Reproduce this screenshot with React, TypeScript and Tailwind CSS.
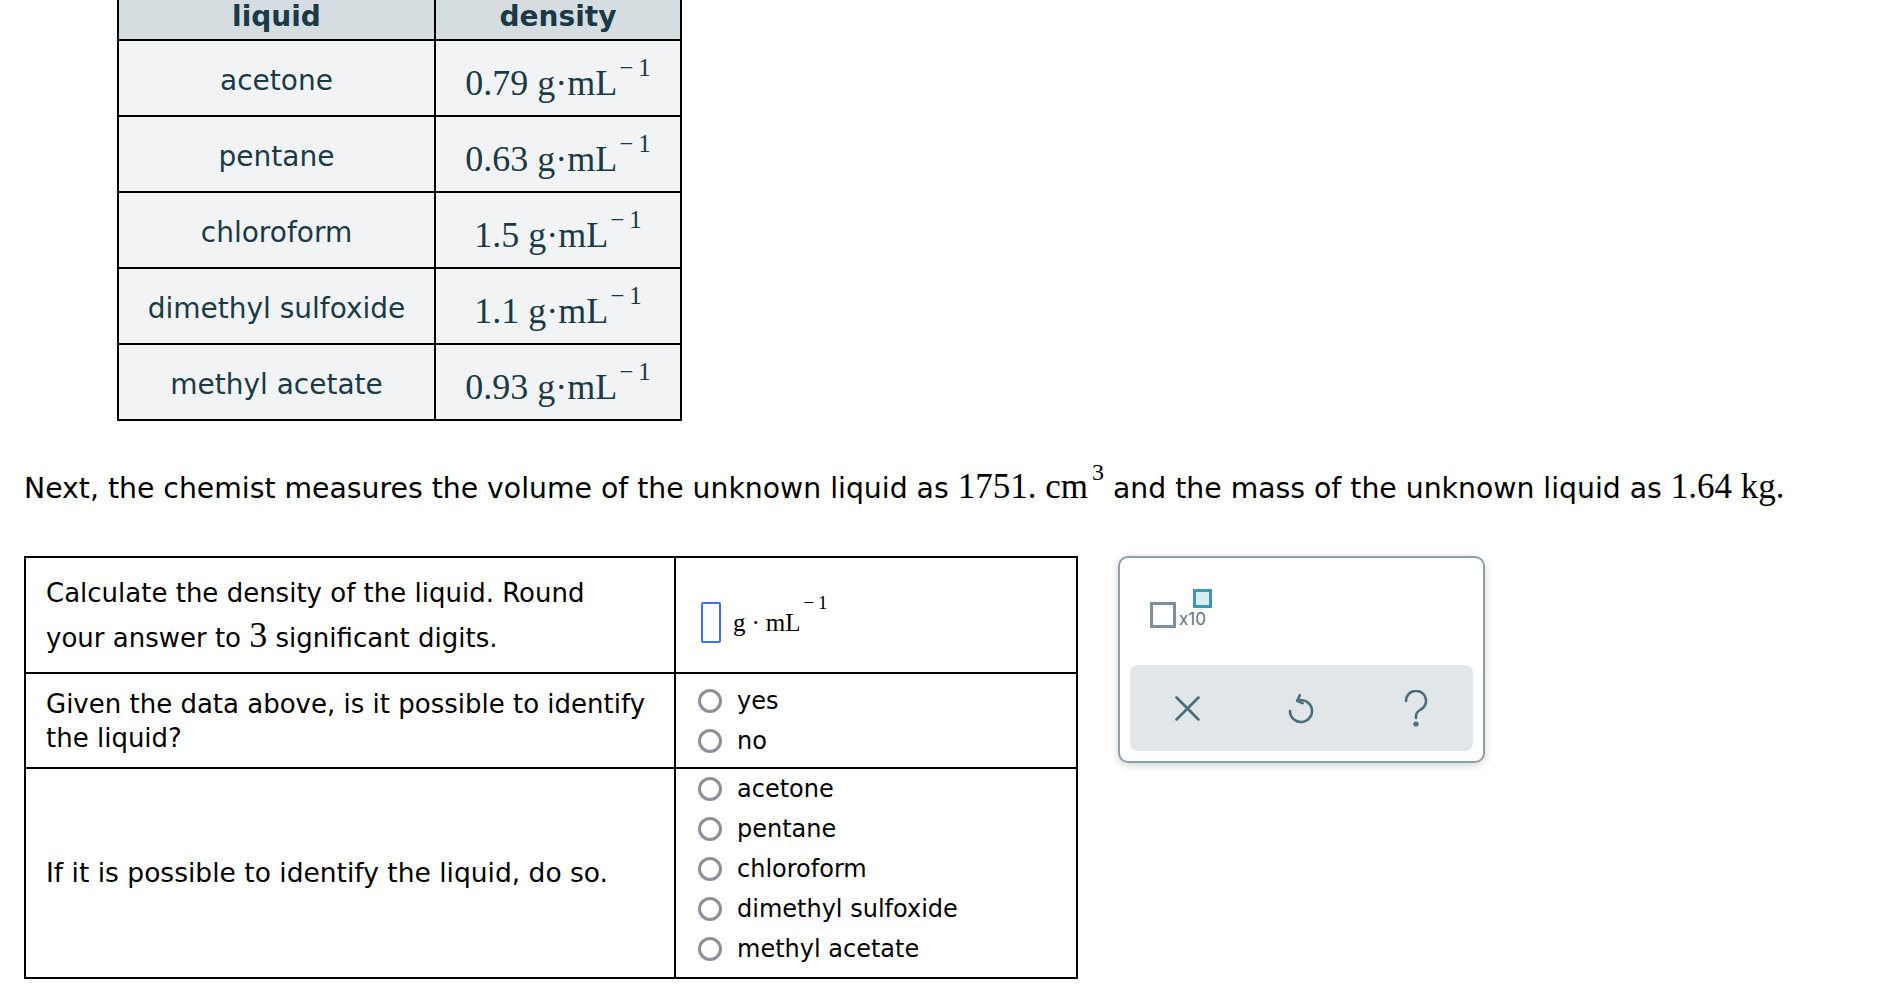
import React from 'react';

const densities = [
  { name: 'acetone', value: '0.79' },
  { name: 'pentane', value: '0.63' },
  { name: 'chloroform', value: '1.5' },
  { name: 'dimethyl sulfoxide', value: '1.1' },
  { name: 'methyl acetate', value: '0.93' },
];

const choices = ['acetone', 'pentane', 'chloroform', 'dimethyl sulfoxide', 'methyl acetate'];

const Density = ({ value }: { value: string }) => (
  <span className="font-['Liberation_Serif',serif] text-[36px] whitespace-nowrap">
    {value} g·mL
    <span className="ml-[2px] text-[25px] align-[19px] leading-[0]">−&thinsp;1</span>
  </span>
);

const Radio = ({ label }: { label: string }) => (
  <div className="flex items-center h-[40px] text-[24px]">
    <span className="w-[24px] h-[24px] rounded-full border-[3px] border-[#8e8f99] bg-white shrink-0" />
    <span className="ml-[15px]">{label}</span>
  </div>
);

const App: React.FC = () => {
  return (
    <div className="min-h-screen bg-white flex flex-col pl-[24px] font-['DejaVu_Sans',Verdana,sans-serif] text-black">
      {/* Density table */}
      <div className="ml-[93px] -mt-[13px] w-[565px] border-l-2 border-t-2 border-black grid grid-cols-[317px_246px] text-[#1b3a47]">
        <div className="h-[52px] pt-[6px] bg-[#d6dde1] border-r-2 border-b-2 border-black flex items-center justify-center text-[28px] font-bold">
          liquid
        </div>
        <div className="h-[52px] pt-[6px] bg-[#d6dde1] border-r-2 border-b-2 border-black flex items-center justify-center text-[28px] font-bold">
          density
        </div>
        {densities.map((row) => (
          <React.Fragment key={row.name}>
            <div className="h-[76px] pt-[5px] bg-[#f1f3f5] border-r-2 border-b-2 border-black flex items-center justify-center text-[28px]">
              {row.name}
            </div>
            <div className="h-[76px] bg-[#f1f3f5] border-r-2 border-b-2 border-black flex items-center justify-center pt-[10px]">
              <Density value={row.value} />
            </div>
          </React.Fragment>
        ))}
      </div>

      {/* Measurement sentence */}
      <p className="mt-[46px] text-[28.3px] leading-[40px] whitespace-nowrap">
        Next, the chemist measures the volume of the unknown liquid as{' '}
        <span className="font-['Liberation_Serif',serif] text-[35px]">
          1751. cm<span className="ml-[4px] text-[24px] align-[18px] leading-[0]">3</span>
        </span>{' '}
        and the mass of the unknown liquid as{' '}
        <span className="font-['Liberation_Serif',serif] text-[35px]">1.64 kg.</span>
      </p>

      <div className="mt-[47px] flex items-start">
        {/* Question table */}
        <div className="w-[1054px] border-l-2 border-t-2 border-black grid grid-cols-[650px_402px] text-[26px]">
          <div className="h-[116px] border-r-2 border-b-2 border-black flex items-center pl-[20px] leading-[42px]">
            <p className="max-w-[580px]">
              Calculate the density of the liquid. Round your answer to{' '}
              <span className="font-['Liberation_Serif',serif] text-[36px]">3</span> significant digits.
            </p>
          </div>
          <div className="h-[116px] border-r-2 border-b-2 border-black flex items-center pl-[25px] pt-[14px]">
            <div className="w-[20px] h-[41px] border-2 border-[#3d6ef5] rounded-[2px]" />
            <span className="ml-[12px] font-['Liberation_Serif',serif] text-[25px] whitespace-nowrap">
              g<span className="mx-[6px]">·</span>mL
              <span className="ml-[3px] text-[19px] align-[22px] leading-[0]">−&thinsp;1</span>
            </span>
          </div>

          <div className="h-[95px] border-r-2 border-b-2 border-black flex items-center pl-[20px] pr-[8px] leading-[34px]">
            <p>Given the data above, is it possible to identify the liquid?</p>
          </div>
          <div className="h-[95px] border-r-2 border-b-2 border-black flex flex-col justify-center pl-[22px]">
            <Radio label="yes" />
            <Radio label="no" />
          </div>

          <div className="h-[210px] border-r-2 border-b-2 border-black flex items-center pl-[20px] text-[26.5px]">
            <p>If it is possible to identify the liquid, do so.</p>
          </div>
          <div className="h-[210px] border-r-2 border-b-2 border-black flex flex-col justify-center pl-[22px] pb-[8px]">
            {choices.map((c) => (
              <Radio key={c} label={c} />
            ))}
          </div>
        </div>

        {/* Answer tools panel */}
        <div className="ml-[40px] w-[367px] h-[207px] rounded-[10px] border-2 border-[#8ea0a7] bg-white shadow-[0_2px_8px_rgba(0,0,0,0.18)] flex flex-col">
          <div className="h-[107px] flex items-start pl-[30px] pt-[31px]">
            <div className="flex items-end">
              <div className="w-[26px] h-[26px] border-[3px] border-[#7d9099]" />
              <div className="flex flex-col">
                <div className="ml-[17px] w-[19px] h-[19px] border-[3px] border-[#3d97b1] bg-[#d4eef4]" />
                <span className="mt-[2px] ml-[3px] text-[17px] leading-[18px] text-[#5a7480] font-['Inter',sans-serif]">x10</span>
              </div>
            </div>
          </div>
          <div className="mx-[10px] mb-[10px] flex-1 rounded-[8px] bg-[#e1e6e9] flex text-[#4b6e7c]">
            <div className="flex-1 flex items-center justify-center">
              <svg width="25" height="25" viewBox="0 0 24 24" fill="none" stroke="currentColor" strokeWidth="2.6" strokeLinecap="round">
                <path d="M1.5 1.5 L22.5 22.5 M22.5 1.5 L1.5 22.5" />
              </svg>
            </div>
            <div className="flex-1 flex items-center justify-center">
              <svg width="26" height="32" viewBox="0 0 26 32" fill="none" stroke="currentColor" strokeWidth="2.6" strokeLinecap="round" strokeLinejoin="round">
                <path d="M9.2 8.7 A11 11 0 1 1 2 19" />
                <path d="M11.8 3.2 L9.2 8.7 L14.7 11.2" />
              </svg>
            </div>
            <div className="flex-1 flex items-center justify-center">
              <svg width="24" height="37" viewBox="0 0 24 37" fill="none" stroke="currentColor" strokeWidth="2.6" strokeLinecap="round">
                <path d="M2 11 A10 10 0 1 1 16 20 C13.5 21.5 12 23 12 26 V28" />
                <circle cx="12" cy="34" r="1.3" fill="currentColor" />
              </svg>
            </div>
          </div>
        </div>
      </div>
    </div>
  );
};

export default App;
